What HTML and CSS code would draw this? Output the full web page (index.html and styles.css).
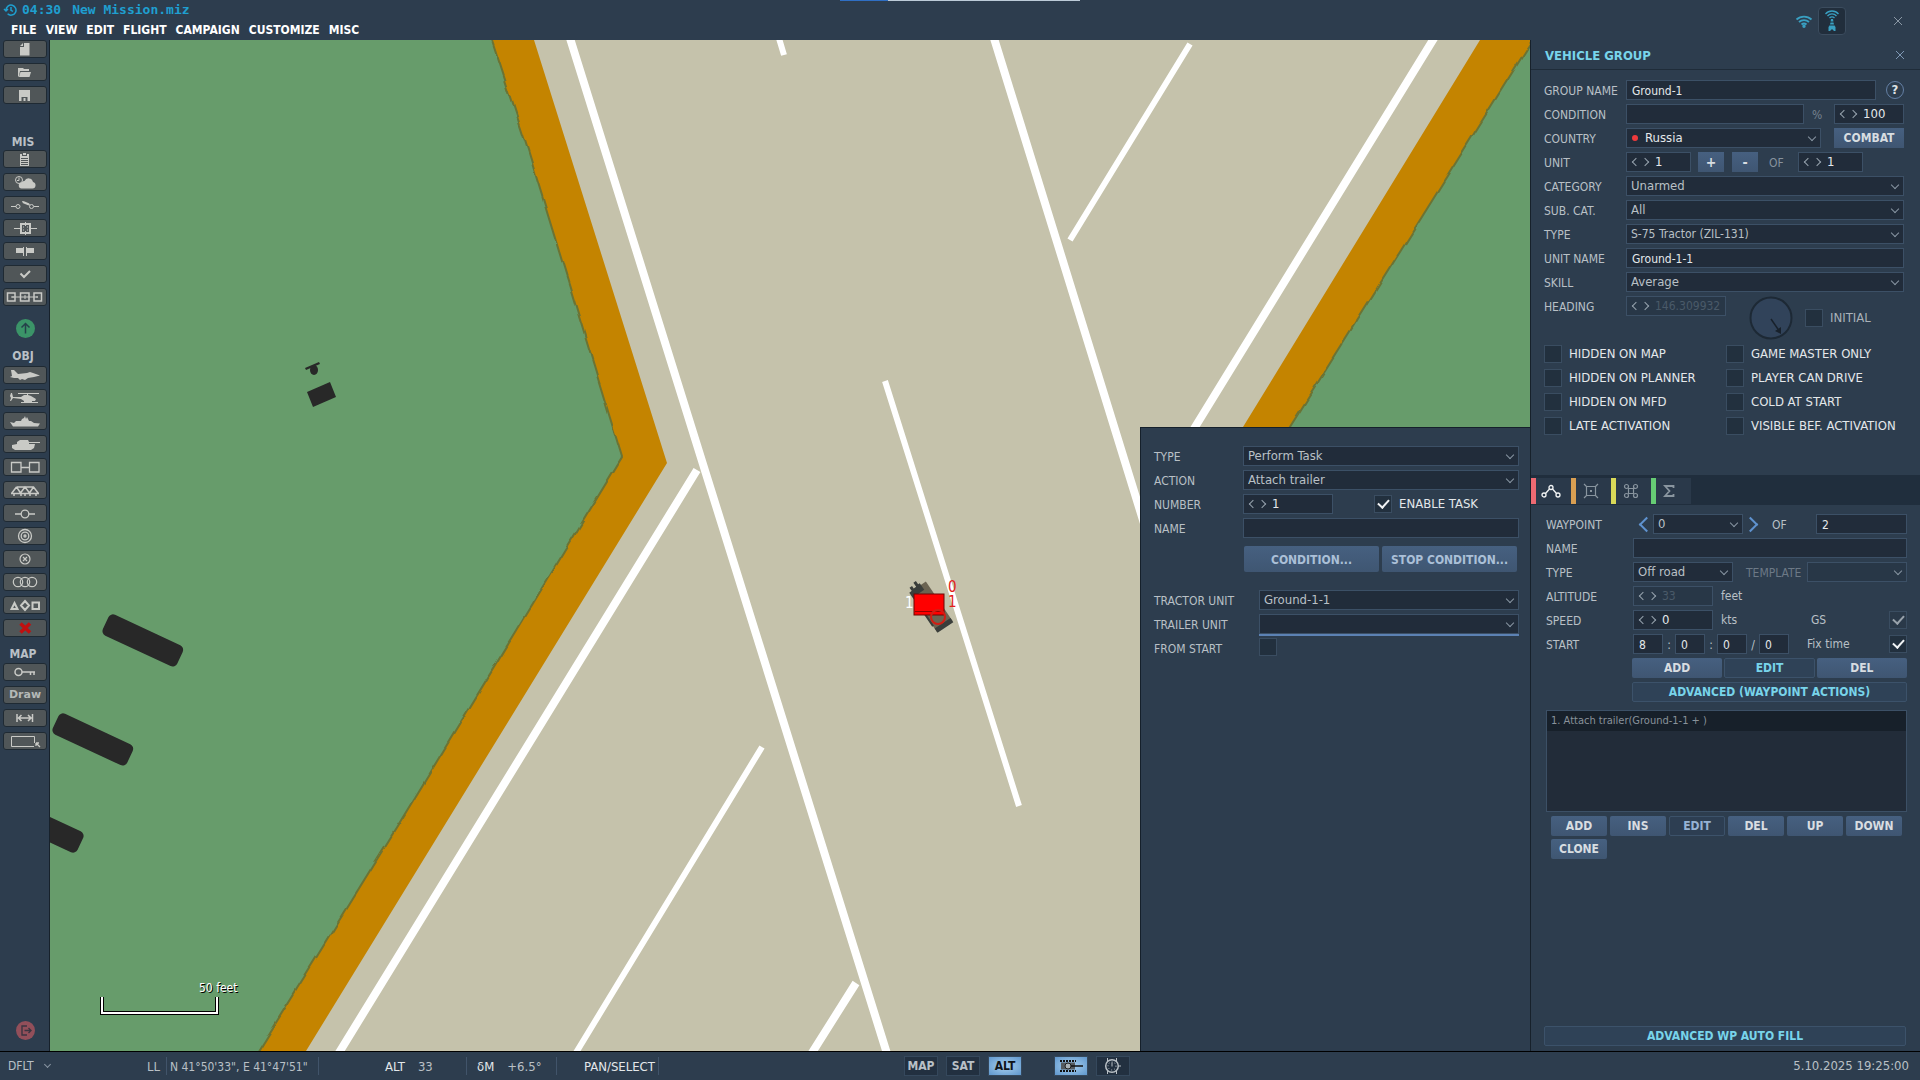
FILE: index.html
```html
<!DOCTYPE html>
<html lang="en">
<head>
  <meta charset="UTF-8" />
  <title>New Mission.miz</title>
  <meta name="viewport" content="width=device-width, initial-scale=1" />
  <link rel="stylesheet" href="styles.css">
</head>
<body>
  <header class="topbar">
    <div class="progress"></div>
    <div class="topbar-left">
      <div class="mission">
        <svg width="14" height="14" viewBox="0 0 14 14" fill="none" stroke="currentColor" stroke-width="1.5"><path d="M3 7a5 5 0 1 1 1.6 3.8M1 6l2 2 2-2M8 4v3.4l2 1"/></svg>
        <span>04:30</span><span>New Mission.miz</span>
      </div>
      <nav class="menu">
        <a href="#">FILE</a>
        <a href="#">VIEW</a>
        <a href="#">EDIT</a>
        <a href="#">FLIGHT</a>
        <a href="#">CAMPAIGN</a>
        <a href="#">CUSTOMIZE</a>
        <a href="#">MISC</a>
      </nav>
    </div>
    <div class="topbar-right">
      <svg class="wifi" width="18" height="14" viewBox="0 0 18 14" fill="none" stroke="currentColor" stroke-width="1.8"><path d="M1.500 5.500a11 11 0 0 1 15 0M4 8a7.500 7.500 0 0 1 10 0M6.500 10.500a4 4 0 0 1 5 0"/><circle cx="9" cy="12.300" r=".8"/></svg>
      <button class="tower" aria-label="Server">
        <svg width="18" height="24" viewBox="0 0 18 24" fill="none" stroke="currentColor"><path d="M2.500 5a8.500 8.500 0 0 1 13 0M4.500 7a6 6 0 0 1 9 0M6.500 9a3.500 3.500 0 0 1 5 0" stroke-width="1.300"/><path d="M8 10h2l1 6 1.500 2v4H11l-2-2-2 2H5.500v-4L7 16z" fill="currentColor" stroke="none"/><path d="M7 13h4M7 16h4" stroke="#1f2c39"/></svg>
      </button>
      <button class="close" aria-label="Close editor"><svg width="10" height="10" viewBox="0 0 10 10" stroke="currentColor"><path d="M1 1l8 8M9 1l-8 8"/></svg></button>
    </div>
  </header>

  <main class="workspace">
    <aside class="toolbar">
      <div class="tools">
        <button aria-label="New"><svg viewBox="1 1 42 16"><path fill="currentColor" d="M21 3h5.500v12.500H17V7h4zM20 3v3h-3z"/></svg></button>
        <button aria-label="Open"><svg viewBox="1 1 42 16"><path fill="currentColor" d="M15 5h5l1 1h5v2h-9l-1 5-1 1zM17.500 9H28l-1.500 5H16z"/></svg></button>
        <button aria-label="Save"><svg viewBox="1 1 42 16"><path fill="currentColor" fill-rule="evenodd" d="M16 4h11v11H16zM18.500 11v4h6v-4z"/><path fill="currentColor" d="M20.500 12h2v3h-2z"/></svg></button>
      </div>
      <h3 class="mis">MIS</h3>
      <div class="tools">
        <button aria-label="Briefing"><svg viewBox="1 1 42 16"><path fill="currentColor" d="M17 4h2v2h5V4h2v12h-9zM20 3h3v2h-3z"/><path stroke="#505658" d="M18 8.500h7M18 10.500h7M18 12.500h7M18 14.500h7"/></svg></button>
        <button aria-label="Weather"><svg viewBox="1 1 42 16"><g fill="none" stroke="currentColor"><circle cx="16" cy="7" r="3.500"/><path d="M16 4.500V7.500h-2"/></g><path fill="currentColor" d="M19 15.500a3 3 0 0 1-.5-6 3 3 0 0 1 3-1.500 4.500 4.500 0 0 1 8.500 1 3.300 3.300 0 0 1-.5 6.500z"/></svg></button>
        <button aria-label="Triggers"><svg viewBox="1 1 42 16" fill="none" stroke="currentColor"><path d="M8 10.500h5M31 10.500h5M19 5.500l8 3.500" /><path d="M20 6l6 2.500" stroke-width="2"/><circle cx="15" cy="10.500" r="2"/><circle cx="28.500" cy="10.500" r="2"/></svg></button>
        <button aria-label="Goals"><svg viewBox="1 1 42 16" fill="none" stroke="currentColor"><path d="M11 9.500h7M27 9.500h7M22.500 3v4M22.500 12v4"/><path d="M18 5h9v9h-9z" stroke-width="2"/><path d="M20 8h1M24 8h1M20 11h1M24 11h1"/></svg></button>
        <button aria-label="Bullseye"><svg viewBox="1 1 42 16"><path fill="currentColor" d="M13 6h7V5h1v9h-1v-3h-7zM23 5h1v1h7v5h-7v3h-1z"/></svg></button>
        <button aria-label="Check"><svg viewBox="1 1 42 16" fill="none" stroke="currentColor" stroke-width="2"><path d="M17.500 8.500l3.500 3.500 6-6"/></svg></button>
        <button aria-label="Sequence"><svg viewBox="1 1 42 16" fill="none" stroke="currentColor" stroke-width="1.500"><path d="M4.500 5h7.500v8H4.500zM17.500 5H26v8h-8.500zM31 5h7.500v8H31z"/><path d="M8 9h27M10 8v2M22 7v4M34 8v2" stroke-width="1"/></svg></button>
      </div>
      <button class="round start" aria-label="Fly"><svg width="19" height="19" viewBox="0 0 19 19" fill="none" stroke="#25404a" stroke-width="1.500"><path d="M9.500 14.500V5M5.500 8.500l4-4 4 4"/></svg></button>
      <h3 class="obj">OBJ</h3>
      <div class="tools">
        <button aria-label="Airplane"><svg viewBox="1 1 42 16"><path fill="currentColor" d="M8 4h3l4 4 9-1 3-1 3 1 7 2.500-6 1.500-6 1-3 2-3-1-2 1-2-2h-4l-4-1 2-1z"/></svg></button>
        <button aria-label="Helicopter"><svg viewBox="1 1 42 16"><path fill="currentColor" d="M8 4h1l1 4h8l3-2h3V5h-9V4h21v1H25v1l3 1 5 3-1 2h-3v1h6v1H18v-1h3v-1l-3-2-8-1-2 3H7l1-3-1-2z"/></svg></button>
        <button aria-label="Ship"><svg viewBox="1 1 42 16"><path fill="currentColor" d="M7 10l4 1 2-2h5l1-2 2-1 1-2 1 3 1-2 2 4h2l3 2 6 .5-2 3H10z"/></svg></button>
        <button aria-label="Vehicle"><svg viewBox="1 1 42 16"><path fill="currentColor" d="M14 7l3-2h8l1 2h11v1H26v1h6l-1 4-3 2H12l-3-2V10l5-1z"/></svg></button>
        <button aria-label="Static"><svg viewBox="1 1 42 16" fill="none" stroke="currentColor" stroke-width="1.300"><path d="M8.500 4.500H18V14H8.500zM26.500 4.500H36V14h-9.500zM18 9.500h8.500"/></svg></button>
        <button aria-label="Bridge"><svg viewBox="1 1 42 16" fill="none" stroke="currentColor" stroke-width="1.500"><path d="M13.500 6h17l5 6.500M13.500 6l-5 6.500M8 12.500h28M13.500 6l4 6 4.500-6 4.500 6 4-6M11 13v2M22 13v2M33 13v2M18 13v2M27 13v2"/></svg></button>
        <button aria-label="Node"><svg viewBox="1 1 42 16" fill="none" stroke="currentColor" stroke-width="1.300"><circle cx="22" cy="10" r="3.800"/><path d="M12 10h6M26 10h6"/></svg></button>
        <button aria-label="Zone"><svg viewBox="1 1 42 16" fill="none" stroke="currentColor" stroke-width="1.300"><circle cx="22" cy="9" r="6.500"/><circle cx="22" cy="9" r="3.800"/><circle cx="22" cy="9" r="1"/></svg></button>
        <button aria-label="Point"><svg viewBox="1 1 42 16" fill="none" stroke="currentColor" stroke-width="1.200"><circle cx="22" cy="9" r="5"/><path d="M20 7l4 4M24 7l-4 4"/></svg></button>
        <button aria-label="Rings"><svg viewBox="1 1 42 16" fill="none" stroke="currentColor" stroke-width="1.200"><circle cx="15" cy="9" r="4.700"/><circle cx="22" cy="9" r="4.700"/><circle cx="29" cy="9" r="4.700"/></svg></button>
        <button aria-label="Shapes"><svg viewBox="1 1 42 16" fill="none" stroke="currentColor" stroke-width="2"><path d="M8.500 13h6l-3-6zM22 5l4 4.500-4 4.500-4-4.500zM29.500 6.500h6.500V13h-6.500z"/></svg></button>
        <button aria-label="Delete" class="delete"><svg viewBox="1 1 42 16" fill="none" stroke="currentColor" stroke-width="3.500"><path d="M17.500 4.500l9.500 9M27 4.500l-9.500 9"/></svg></button>
      </div>
      <h3 class="map-title">MAP</h3>
      <div class="tools">
        <button aria-label="Key"><svg viewBox="1 1 42 16" fill="none" stroke="currentColor" stroke-width="1.500"><circle cx="15.500" cy="9" r="3.500"/><path d="M19 9h13M27.500 9v3M31 9v3" /></svg></button>
        <button class="draw">Draw</button>
        <button aria-label="Measure"><svg viewBox="1 1 42 16" fill="none" stroke="currentColor" stroke-width="1.500"><path d="M14 5v8M29.500 5v8M15 9h14M18.500 6l-3 3 3 3M25 6l3 3-3 3"/></svg></button>
        <button aria-label="Select area"><svg viewBox="1 1 42 16" fill="none" stroke="currentColor"><path d="M31 14.500H8.500v-10H31.500V11"/><path d="M33 11v3M33 11h3M33 11l4 4" stroke-width="1.300"/></svg></button>
      </div>
      <button class="round exit" aria-label="Exit"><svg width="19" height="19" viewBox="0 0 19 19" fill="none" stroke="#3b3541" stroke-width="1.400"><path d="M11 5H6v9h5M8.500 9.500H15M12.500 7l2.500 2.500-2.500 2.500"/></svg></button>
    </aside>

    <section class="map">
      <svg class="scene" viewBox="50 40 1480 1011" preserveAspectRatio="xMinYMin slice">
        <defs>
          <filter id="rough" filterUnits="userSpaceOnUse" x="0" y="0" width="1600" height="1100" color-interpolation-filters="sRGB">
            <feTurbulence type="fractalNoise" baseFrequency="0.05" numOctaves="1" seed="4" />
            <feDisplacementMap in="SourceGraphic" scale="6" xChannelSelector="R" yChannelSelector="G" />
          </filter>
        </defs>
        <rect x="50" y="40" width="1480" height="1011" fill="#c5c2ab" />
        <path fill="#c48400" d="M400 40H534L667 463 306 1051H200z M1480 40H1560V427H1243z" />
        <g fill="#679c6b" stroke="#6b7334" stroke-width="2" filter="url(#rough)">
          <path d="M0 0H480L492 40 528 150 622 457 400 822 256 1055 228 1100H0z" />
          <path d="M1560 0L1530 44 1410 236 1288 430 1258 480H1600V0z" />
        </g>
        <g stroke="#fff" fill="none">
          <path stroke-width="8" d="M569 35L889 1060M993 35L1151 546M1436 35L1192 432M697 470L337 1056M856 983L810 1056" />
          <path stroke-width="6" d="M1190 44L1070 240M885 381L1019 806M778 35L784 55M762 747L574 1056" />
        </g>
        <g fill="#282828">
          <rect x="102" y="629" width="82" height="23" rx="5" transform="rotate(25 143 640)" />
          <rect x="52" y="728" width="82" height="23" rx="5" transform="rotate(25 93 739)" />
          <rect x="2" y="815" width="82" height="23" rx="5" transform="rotate(25 43 827)" />
          <path d="M307 392l23-10 6 15-23 10z" />
          <ellipse cx="314" cy="370" rx="4" ry="5" />
          <path d="M305 368l14-6 1 2-14 6z" />
        </g>
        <!-- selected truck -->
        <g transform="rotate(-34 931 607)">
          <path fill="#6b6452" d="M922 583h19v48h-19z" />
          <path fill="#3a3e3b" d="M921 583h3v-4h3v3h3v-5h3v4h2v8h-14zM922 627h19v5h-19zM921 588h2v36h-2z" />
        </g>
        <rect x="914" y="594" width="30" height="21" fill="#f00" stroke="#6d0705" />
        <path stroke="#920000" d="M915 611.500h28" />
        <circle cx="938" cy="617" r="7" fill="none" stroke="#d21e14" stroke-width="2" />
        <g class="unit-tags">
          <text x="905" y="608" fill="#fff">1</text>
          <text x="948" y="592" fill="#e31d1a">0</text>
          <text x="948" y="607" fill="#e31d1a">1</text>
        </g>
      </svg>

      <div class="scale">
        <span>50 feet</span>
        <svg width="120" height="20" viewBox="0 0 120 20" fill="none"><path d="M2 1v16h115V1" stroke="#000" stroke-width="4"/><path d="M2 1v16h115V1" stroke="#fff" stroke-width="2"/></svg>
      </div>

      <form class="task-panel">
        <div class="row">
          <label for="taskType">TYPE</label>
          <div class="select grow"><select id="taskType"><option>Perform Task</option></select></div>
        </div>
        <div class="row">
          <label for="taskAction">ACTION</label>
          <div class="select grow"><select id="taskAction"><option>Attach trailer</option></select></div>
        </div>
        <div class="row">
          <label for="taskNumber">NUMBER</label>
          <div class="spin w90"><button type="button" class="prev" aria-label="Less"></button><button type="button" class="next" aria-label="More"></button><input type="text" id="taskNumber" value="1"></div>
          <label class="check enable"><input type="checkbox" checked>ENABLE TASK</label>
        </div>
        <div class="row">
          <label for="taskName">NAME</label>
          <input type="text" class="grow" id="taskName">
        </div>
        <div class="task-buttons">
          <button type="button" class="btn">CONDITION...</button>
          <button type="button" class="btn">STOP CONDITION...</button>
        </div>
        <div class="row wide">
          <label for="tractor">TRACTOR UNIT</label>
          <div class="select grow"><select id="tractor"><option>Ground-1-1</option></select></div>
        </div>
        <div class="row wide">
          <label for="trailer">TRAILER UNIT</label>
          <div class="select grow focused"><select id="trailer"><option></option></select></div>
        </div>
        <div class="row wide">
          <label for="fromStart">FROM START</label>
          <input type="checkbox" id="fromStart">
        </div>
      </form>
    </section>

    <aside class="side">
      <div class="side-title">
        <h2>VEHICLE GROUP</h2>
        <button class="close" aria-label="Close panel"><svg width="10" height="10" viewBox="0 0 10 10" stroke="currentColor"><path d="M1 1l8 8M9 1l-8 8"/></svg></button>
      </div>

      <form class="group-form">
        <div class="row">
          <label for="groupName">GROUP NAME</label>
          <input type="text" class="grow" id="groupName" value="Ground-1">
          <button type="button" class="help">?</button>
        </div>
        <div class="row">
          <label for="condition">CONDITION</label>
          <input type="text" class="grow" id="condition">
          <span class="percent">%</span>
          <div class="spin w70"><button type="button" class="prev" aria-label="Less"></button><button type="button" class="next" aria-label="More"></button><input type="text" aria-label="Percent" value="100"></div>
        </div>
        <div class="row">
          <label for="country">COUNTRY</label>
          <div class="select grow country"><select id="country"><option>Russia</option></select></div>
          <button type="button" class="btn combat">COMBAT</button>
        </div>
        <div class="row">
          <label for="unit">UNIT</label>
          <div class="spin w65"><button type="button" class="prev" aria-label="Less"></button><button type="button" class="next" aria-label="More"></button><input type="text" id="unit" value="1"></div>
          <button type="button" class="btn step">+</button>
          <button type="button" class="btn step">-</button>
          <span class="unit-of">OF</span>
          <div class="spin w65"><button type="button" class="prev" aria-label="Less"></button><button type="button" class="next" aria-label="More"></button><input type="text" aria-label="Unit count" value="1"></div>
        </div>
        <div class="row">
          <label for="category">CATEGORY</label>
          <div class="select grow"><select id="category"><option>Unarmed</option></select></div>
        </div>
        <div class="row">
          <label for="subcat">SUB. CAT.</label>
          <div class="select grow"><select id="subcat"><option>All</option></select></div>
        </div>
        <div class="row">
          <label for="unitType">TYPE</label>
          <div class="select grow small"><select id="unitType"><option>S-75 Tractor (ZIL-131)</option></select></div>
        </div>
        <div class="row">
          <label for="unitName">UNIT NAME</label>
          <input type="text" class="grow" id="unitName" value="Ground-1-1">
        </div>
        <div class="row">
          <label for="skill">SKILL</label>
          <div class="select grow"><select id="skill"><option>Average</option></select></div>
        </div>
        <div class="row heading">
          <label for="heading">HEADING</label>
          <div class="spin w100 off"><button type="button" class="prev" aria-label="Less"></button><button type="button" class="next" aria-label="More"></button><input type="text" id="heading" value="146.309932" disabled></div>
          <svg class="dial" width="44" height="44" viewBox="0 0 44 44"><circle cx="22" cy="22" r="20.500" fill="#31435a" stroke="#1d2935" stroke-width="2"/><path d="M22 23l9 13" stroke="#18212b" stroke-width="1.500"/><path d="M32 38l-6-3 6-4z" fill="#18212b"/></svg>
          <label class="check dim"><input type="checkbox">INITIAL</label>
        </div>
        <div class="flags">
          <label class="check"><input type="checkbox">HIDDEN ON MAP</label>
          <label class="check"><input type="checkbox">GAME MASTER ONLY</label>
          <label class="check"><input type="checkbox">HIDDEN ON PLANNER</label>
          <label class="check"><input type="checkbox">PLAYER CAN DRIVE</label>
          <label class="check"><input type="checkbox">HIDDEN ON MFD</label>
          <label class="check"><input type="checkbox">COLD AT START</label>
          <label class="check"><input type="checkbox">LATE ACTIVATION</label>
          <label class="check"><input type="checkbox">VISIBLE BEF. ACTIVATION</label>
        </div>
      </form>

      <div class="tabs">
        <button class="tab red active" aria-label="Route"><svg width="20" height="16" viewBox="0 0 20 16" fill="none" stroke="currentColor" stroke-width="1.300"><path d="M4.500 10.500l4-4.500M11.500 6l4 4.500"/><circle cx="10" cy="4.500" r="2"/><circle cx="3" cy="12" r="2"/><circle cx="17" cy="12" r="2"/></svg></button>
        <button class="tab orange" aria-label="Targets"><svg width="16" height="16" viewBox="0 0 16 16" fill="none" stroke="currentColor" stroke-width="1.200"><path d="M3.500 3.500h9v9h-9zM1 1l3 3M15 1l-3 3M1 15l3-3M15 15l-3-3"/><path d="M7 8h2" stroke-width="2"/></svg></button>
        <button class="tab yellow" aria-label="Links"><svg width="16" height="16" viewBox="0 0 16 16" fill="none" stroke="currentColor" stroke-width="1.200"><path d="M5.500 5.500h5v5h-5z"/><circle cx="3.500" cy="3.500" r="2"/><circle cx="12.500" cy="3.500" r="2"/><circle cx="3.500" cy="12.500" r="2"/><circle cx="12.500" cy="12.500" r="2"/></svg></button>
        <button class="tab green" aria-label="Summary"><svg width="12" height="14" viewBox="0 0 12 14" fill="none" stroke="currentColor" stroke-width="1.800"><path d="M10.500 4V2H2l4.500 5L2 12h8.500v-2"/></svg></button>
      </div>

      <form class="route-form">
        <div class="row">
          <label for="waypoint">WAYPOINT</label>
          <button type="button" class="arrow prev" aria-label="Previous waypoint"></button>
          <div class="select w90"><select id="waypoint"><option>0</option></select></div>
          <button type="button" class="arrow next" aria-label="Next waypoint"></button>
          <span class="wp-of">OF</span>
          <input type="text" class="wp-count" aria-label="Waypoint count" value="2">
        </div>
        <div class="row">
          <label for="wpName">NAME</label>
          <input type="text" class="grow" id="wpName">
        </div>
        <div class="row">
          <label for="wpType">TYPE</label>
          <div class="select w100"><select id="wpType"><option>Off road</option></select></div>
          <label for="template" class="template">TEMPLATE</label>
          <div class="select w100 off"><select id="template" disabled><option></option></select></div>
        </div>
        <div class="row">
          <label for="altitude">ALTITUDE</label>
          <div class="spin w80 off"><button type="button" class="prev" aria-label="Less"></button><button type="button" class="next" aria-label="More"></button><input type="text" id="altitude" value="33" disabled></div>
          <span class="measure">feet</span>
        </div>
        <div class="row">
          <label for="speed">SPEED</label>
          <div class="spin w80"><button type="button" class="prev" aria-label="Less"></button><button type="button" class="next" aria-label="More"></button><input type="text" id="speed" value="0"></div>
          <span class="measure">kts</span>
          <label class="check end gs">GS<input type="checkbox" checked disabled></label>
        </div>
        <div class="row time">
          <label for="startH">START</label>
          <input type="text" id="startH" value="8"><span>:</span>
          <input type="text" aria-label="Minutes" value="0"><span>:</span>
          <input type="text" aria-label="Seconds" value="0"><span>/</span>
          <input type="text" aria-label="Day" value="0">
          <label class="check end">Fix time<input type="checkbox" checked></label>
        </div>
        <div class="wp-buttons">
          <button type="button" class="btn">ADD</button>
          <button type="button" class="btn pressed">EDIT</button>
          <button type="button" class="btn">DEL</button>
          <button type="button" class="btn pressed full">ADVANCED (WAYPOINT ACTIONS)</button>
        </div>
        <ul class="actions">
          <li>1. Attach trailer(Ground-1-1 + )</li>
        </ul>
        <div class="action-buttons">
          <button type="button" class="btn">ADD</button>
          <button type="button" class="btn">INS</button>
          <button type="button" class="btn inactive">EDIT</button>
          <button type="button" class="btn">DEL</button>
          <button type="button" class="btn">UP</button>
          <button type="button" class="btn">DOWN</button>
          <button type="button" class="btn">CLONE</button>
        </div>
      </form>
      <button class="btn pressed autofill">ADVANCED WP AUTO FILL</button>
    </aside>
  </main>

  <footer class="status">
    <button class="profile">DFLT<i></i></button>
    <span class="cell ll">LL</span>
    <span class="cell coords">N 41°50'33", E 41°47'51"</span>
    <span class="cell alt"><b>ALT</b>33</span>
    <span class="cell dm"><b>δM</b>+6.5°</span>
    <span class="cell mode"><b>PAN/SELECT</b></span>
    <div class="layers">
      <button>MAP</button>
      <button>SAT</button>
      <button class="on">ALT</button>
      <button class="on tank" aria-label="Units"><svg width="24" height="12" viewBox="0 0 24 12"><path d="M1 1h16M1 11h16" stroke="#111" stroke-width="2" stroke-dasharray="2 1"/><path d="M2 2.500h14v7H2z" fill="#555b5f"/><circle cx="9" cy="6" r="3" fill="#a9b2b6" stroke="#222"/><path d="M12 6h12" stroke="#111" stroke-width="1.500"/></svg></button>
      <button aria-label="Time"><svg width="18" height="16" viewBox="0 0 18 16" fill="none" stroke="currentColor"><circle cx="8" cy="8" r="6.300" stroke-width="1.500"/><circle cx="8" cy="8" r="4" stroke-dasharray="1 2"/><path d="M8 4.500V8.500M3.500 0v3M12.500 0v3M3.500 13v3M12.500 13v3M14.500 8H17"/></svg></button>
    </div>
    <time>5.10.2025 19:25:00</time>
  </footer>
</body>
</html>
```
FILE: styles.css
```css
* { box-sizing: border-box; }
html, body { height: 100%; }
body { margin: 0; display: flex; flex-direction: column; overflow: hidden; background: #2d3d4e; color: #b9c0c6; font: 12px/18px "DejaVu Sans Condensed", "DejaVu Sans", sans-serif; }
button, input, select { font: inherit; color: inherit; margin: 0; padding: 0; border: 0; border-radius: 0; background: none; min-width: 0; }
button { cursor: pointer; }
svg { display: block; flex: none; }
h2, h3, ul { margin: 0; padding: 0; }

/* top bar */
.topbar { position: relative; height: 40px; flex: none; display: flex; justify-content: space-between; }
.progress { position: absolute; left: 840px; top: 0; width: 240px; height: 1px; background: linear-gradient(to right, #2f6fc4 20%, #bccbd8 20%); }
.mission { display: flex; align-items: center; height: 20px; padding-left: 3px; color: #1f9fd0; font: bold 13px/20px "DejaVu Sans Mono", monospace; }
.mission svg { margin-right: 5px; }
.mission span { margin-right: 11px; }
.menu { display: flex; gap: 9px; padding-left: 11px; line-height: 20px; }
.menu a { color: #fff; text-decoration: none; font-weight: bold; }
.topbar-right { display: flex; align-items: flex-start; padding: 7px 16px 0 0; }
.wifi { color: #39a0c2; margin: 7px 5px 0 0; }
.tower { width: 28px; height: 28px; display: grid; place-items: center; color: #39a0c2; background: #212e3c; border: 1px solid #3b4c5e; border-radius: 4px; margin-right: 46px; }
.close { color: #7f98b5; padding: 1px; }
.topbar-right .close { color: #8b98a5; margin-top: 8px; }

.workspace { flex: 1; min-height: 0; display: flex; }

/* left toolbar */
.toolbar { width: 50px; flex: none; display: flex; flex-direction: column; border-right: 1px solid #17212b; padding: 0 2px 11px 3px; }
.tools { display: grid; gap: 5px; }
.tools button { width: 44px; height: 18px; background: #505658; border: 1px solid #1f2a33; border-radius: 3px; color: #c9cac6; font: bold 11px/16px "DejaVu Sans", sans-serif; }
.tools button svg { width: 42px; height: 16px; }
.tools .draw { color: #b4b8b7; }
.tools .delete { color: #c01010; }
.toolbar h3 { height: 18px; line-height: 18px; font-size: 12px; padding-right: 4px; text-align: center; }
.mis { margin: 29px 0 -1px; }
.obj { margin: 9px 0 1px; }
.map-title { margin: 8px 0 0; }
.round { width: 19px; height: 19px; border-radius: 50%; margin-left: 13px; }
.start { background: #3b9468; margin-top: 13px; }
.exit { background: #924f5a; margin-top: auto; }

/* map */
.map { position: relative; flex: 1; min-width: 0; background: #c5c2ab; }
.scene { position: absolute; width: 100%; height: 100%; }
.unit-tags { font-size: 15px; }
.scale { position: absolute; left: 50px; bottom: 35px; color: #fff; text-shadow: 1px 1px 0 #000; }
.scale span { display: block; padding-left: 99px; line-height: 16px; }

/* task panel lies over the map corner */
.task-panel { position: absolute; right: 0; bottom: 0; width: 390px; height: 624px; padding: 18px 11px 0 13px; background: #2d3d4e; border: 1px solid #15202b; border-width: 1px 0 0 1px; }
.row { display: flex; height: 20px; margin-bottom: 4px; line-height: 22px; }
.row > label:first-child { flex: none; width: 82px; }
.task-panel .row > label:first-child { width: 89px; }
.task-panel .wide > label:first-child { width: 105px; }
.task-buttons { display: grid; grid-template-columns: 1fr 1fr; gap: 3px; margin: 8px 2px 18px 90px; }
.task-buttons .btn { height: 26px; line-height: 26px; color: #abc0d8; }
.enable { margin-left: 41px; }

/* fields */
.grow { flex: 1; min-width: 0; }
.w65 { width: 65px; }
.w70 { width: 70px; }
.w80 { width: 80px; }
.w90 { width: 90px; }
.w100 { width: 100px; }
input[type="text"] { height: 20px; padding: 1px 5px 0; color: #e4e8eb; background: #212c3a; border: 1px solid #3c5066; }
.select { position: relative; height: 20px; }
.select select { appearance: none; display: block; width: 100%; height: 20px; line-height: 18px; padding-left: 4px; background: #212c3a; border: 1px solid #3c5066; font-size: 13px; opacity: 1; }
.small select { font-size: 12px; }
.select::after, .profile i { content: ""; position: absolute; right: 6px; top: 6px; width: 5px; height: 5px; border: solid #8895a2; border-width: 0 1px 1px 0; transform: rotate(45deg); pointer-events: none; }
.focused::before { content: ""; position: absolute; left: 0; right: 0; top: 20px; height: 2px; background: #5c82b4; }
.country select { padding-left: 18px; color: #e4e8eb; }
.country::before { content: ""; position: absolute; left: 6px; top: 7px; width: 6px; height: 6px; border-radius: 50%; background: #ee3a3c; }
.spin { display: flex; flex: none; height: 20px; background: #212c3a; border: 1px solid #3c5066; }
.spin button { width: 12px; flex: none; display: grid; place-items: center; }
.spin .prev { padding-left: 5px; }
.spin .next { padding-right: 1px; }
.spin input[type="text"] { flex: 1; height: 18px; padding: 0 0 0 4px; border: 0; background: none; font-size: 13px; }
.prev::before, .next::before { content: ""; width: 5px; height: 5px; border: solid #97a3ae; border-width: 0 0 1px 1px; transform: rotate(45deg); }
.next::before { transform: rotate(-135deg); }
.off, .spin.off, .off select { background: #283747; }
.spin.off input[type="text"] { color: #4a5a69; font-size: 12px; }
input[type="checkbox"] { appearance: none; width: 18px; height: 18px; flex: none; background: #22303e; border: 1px solid #3a4d61; display: grid; place-items: center; }
input[type="checkbox"]:checked::before { content: ""; width: 5px; height: 9px; margin-top: -3px; border: solid #f0f2f4; border-width: 0 2px 2px 0; transform: rotate(42deg); }
input[type="checkbox"]:disabled { background: #2a3949; }
input[type="checkbox"]:disabled::before { border-color: #98a2ab; }
.check { display: flex; align-items: center; gap: 7px; height: 20px; font-size: 13px; color: #e4e8eb; }
.check.dim { color: #aab2b9; }

/* buttons */
.btn { height: 20px; padding-top: 1px; line-height: 19px; font-weight: bold; color: #d8dde1; background: linear-gradient(#466080, #3f5672); border-radius: 2px; }
.pressed { color: #78d4ea; background: #2f4257; border: 1px solid #3c526a; line-height: 17px; }
.inactive { color: #96b2d4; background: #2d3e52; border: 1px solid #3c526a; line-height: 17px; }

/* right panel */
.side { width: 390px; flex: none; display: flex; flex-direction: column; border-left: 1px solid #17212b; }
.side-title { display: flex; justify-content: space-between; align-items: center; height: 30px; padding: 0 14px; border-bottom: 1px solid #1f2c39; }
.side-title h2 { padding-top: 2px; font-size: 13px; line-height: 20px; color: #78d4ea; }
.group-form { padding: 10px 16px 0 13px; }
.help { width: 18px; height: 18px; margin: 1px 0 0 10px; line-height: 16px; font-weight: bold; font-size: 13px; color: #dfe3e6; border: 1px solid #6480a5; border-radius: 50%; }
.percent { width: 30px; padding-left: 8px; color: #76828e; }
.combat { width: 70px; margin-left: 13px; border-radius: 0; }
.step { width: 26px; margin-left: 7px; font-size: 14px; border-radius: 0; }
.step + .step { margin-left: 8px; }
.unit-of { width: 40px; padding-left: 11px; color: #87929d; }
.heading { height: 44px; }
.dial { margin: 0 12px 0 23px; }
.heading .check { margin-top: 12px; }
.flags { display: grid; grid-template-columns: 182px 1fr; gap: 4px 0; }
.tabs { display: flex; height: 30px; margin-top: 39px; padding: 3px 0 1px; background: #202e3d; }
.tab { width: 40px; display: flex; align-items: center; padding-left: 7px; color: #89959f; background: #2a394a; border-left: 5px solid; }
.tab.active { color: #f2f4f5; padding-left: 5px; }
.red { border-left-color: #ee6a72; }
.orange { border-left-color: #d99f52; }
.yellow { border-left-color: #d9d958; }
.green { border-left-color: #66cc74; }
.route-form { padding: 9px 13px 0 15px; }
.route-form .row > label:first-child { width: 87px; }
.arrow { width: 20px; display: grid; place-items: center; }
.arrow::before { width: 9px; height: 9px; border-color: #5f92cf; border-width: 0 0 2px 2px; }
.arrow.prev { padding-left: 6px; }
.arrow.next { padding-right: 5px; }
.wp-of { flex: 1; padding-left: 9px; }
.wp-count { width: 91px; }
.template { width: 74px; padding-left: 13px; color: #6c7986; }
.measure { padding-left: 8px; line-height: 20px; }
.end { flex: 1; justify-content: space-between; padding-left: 18px; font-size: 12px; color: #b9c0c6; }
.gs { flex: none; width: 96px; padding-left: 0; margin-left: auto; }
.time input[type="text"] { width: 30px; }
.time > span { width: 12px; text-align: center; }
.wp-buttons { display: grid; grid-template-columns: repeat(3, 1fr); gap: 4px 2px; margin-left: 86px; }
.full { grid-column: 1 / -1; }
.actions { height: 102px; margin: 8px 0 4px; list-style: none; background: #222c39; border: 1px solid #3c5066; }
.actions li { height: 20px; line-height: 20px; padding-left: 4px; font-size: 11px; color: #89929a; background: #17202a; }
.action-buttons { display: grid; grid-template-columns: repeat(6, 1fr); gap: 3px; padding: 0 5px; }
.autofill { margin: auto 14px 5px 13px; }

/* status bar */
.status { display: flex; flex: none; align-items: center; height: 29px; padding: 0 11px 0 8px; border-top: 1px solid #000; font-size: 13px; }
.profile { position: relative; width: 44px; line-height: 20px; text-align: left; font-size: 12px; }
.profile i { right: 2px; }
.cell { height: 18px; border-right: 1px solid #41546a; line-height: 20px; white-space: nowrap; }
.cell b { color: #e4e8eb; font-weight: normal; margin-right: 13px; }
.ll { width: 115px; padding-left: 95px; }
.coords { width: 152px; padding-left: 3px; font-size: 12px; }
.alt { width: 148px; padding-left: 66px; }
.dm { width: 90px; padding-left: 10px; }
.mode { width: 102px; padding-left: 27px; }
.mode b { margin: 0; }
.layers { display: flex; gap: 8px; margin-left: 245px; }
.layers button { width: 34px; height: 20px; display: grid; place-items: center; font-weight: bold; font-size: 12px; background: #223040; border: 1px solid #35485c; }
.layers .on { color: #101419; background: radial-gradient(#a9d0ef, #5f97cd); }
.layers .tank { margin-left: 24px; }
.status time { margin-left: auto; line-height: 20px; }
```
